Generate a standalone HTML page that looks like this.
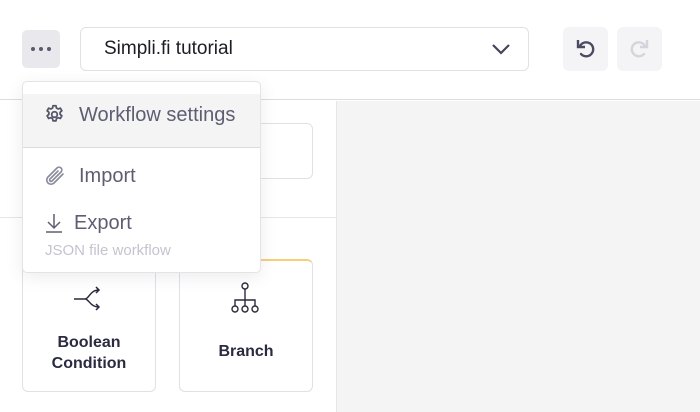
<!DOCTYPE html>
<html><head><style>
*{box-sizing:border-box;margin:0;padding:0}
body{width:700px;height:412px;overflow:hidden;background:#fff;font-family:"Liberation Sans",sans-serif;position:relative}
.a{position:absolute}
</style></head><body>
<div class="a" style="left:0;top:0;width:700px;height:100px;background:#fff;border-bottom:1px solid #dcdce3"></div>
<div class="a" style="left:22px;top:30px;width:38px;height:38px;background:#e8e8ed;border-radius:5px"></div>
<svg class="a" style="left:29px;top:46px" width="24" height="6"><circle cx="4" cy="3" r="2" fill="#5a5a6e"/><circle cx="12" cy="3" r="2" fill="#5a5a6e"/><circle cx="20" cy="3" r="2" fill="#5a5a6e"/></svg>
<div class="a" style="left:80px;top:27px;width:449px;height:44px;border:1px solid #e0e0e6;border-radius:6px"></div>
<div class="a" style="left:104px;top:38px;font-size:19px;color:#1c1c24">Simpli.fi tutorial</div>
<svg class="a" style="left:490px;top:42px" width="22" height="14"><path d="M3 3l8 8 8-8" stroke="#44445a" stroke-width="2.2" fill="none"/></svg>
<div class="a" style="left:563px;top:27px;width:45px;height:44px;background:#f4f4f6;border-radius:6px"></div>
<div class="a" style="left:617px;top:27px;width:45px;height:44px;background:#f4f4f6;border-radius:6px"></div>
<svg class="a" style="left:574px;top:37px" width="24" height="24" viewBox="0 0 24 24"><path d="M6 9a7 7 0 1 1 1 8" stroke="#4a4a60" stroke-width="2.4" fill="none" stroke-linecap="round"/><path d="M4 3v7h7" stroke="#4a4a60" stroke-width="2.4" fill="none"/></svg>
<svg class="a" style="left:627px;top:37px" width="24" height="24" viewBox="0 0 24 24"><path d="M18 9a7 7 0 1 0 -1 8" stroke="#d4d4dc" stroke-width="2.4" fill="none" stroke-linecap="round"/><path d="M20 3v7h-7" stroke="#d4d4dc" stroke-width="2.4" fill="none"/></svg>
<div class="a" style="left:336px;top:101px;width:364px;height:311px;background:#f4f4f5;border-left:1px solid #e6e6ea"></div>
<div class="a" style="left:200px;top:123px;width:113px;height:56px;border:1px solid #e0e0e6;border-radius:6px"></div>
<div class="a" style="left:0;top:217px;width:336px;height:1px;background:#e6e6ea"></div>
<div class="a" style="left:22px;top:259px;width:134px;height:133px;border:1px solid #e0e0e6;border-radius:6px"></div>
<div class="a" style="left:179px;top:259px;width:134px;height:133px;border:1px solid #e0e0e6;border-top:2px solid #f6cf7a;border-radius:6px"></div>
<svg class="a" style="left:73px;top:285px" width="34" height="28" viewBox="0 0 34 28"><path d="M1 14h11M12 14c4 0 5-9 14-9M12 14c4 0 5 8 14 8M23 2l3 3-3 3M23 19l3 3-3 3" stroke="#2a2a3a" stroke-width="1.5" fill="none"/></svg>
<svg class="a" style="left:228px;top:282px" width="34" height="34"><circle cx="17" cy="4" r="3" stroke="#2a2a3a" stroke-width="1.4" fill="none"/><path d="M17 7v20M7 24v-6h20v6" stroke="#2a2a3a" stroke-width="1.4" fill="none"/><circle cx="7" cy="27" r="3" stroke="#2a2a3a" stroke-width="1.4" fill="#fff"/><circle cx="17" cy="27" r="3" stroke="#2a2a3a" stroke-width="1.4" fill="#fff"/><circle cx="27" cy="27" r="3" stroke="#2a2a3a" stroke-width="1.4" fill="#fff"/></svg>
<div class="a" style="left:22px;top:332px;width:134px;text-align:center;font-size:16px;font-weight:bold;color:#2a2a40;line-height:21px">Boolean<br>Condition</div>
<div class="a" style="left:179px;top:343px;width:134px;text-align:center;font-size:16px;font-weight:bold;color:#2a2a40">Branch</div>
<div class="a" style="left:22px;top:81px;width:239px;height:192px;background:#fff;border:1px solid #e3e3e8;border-radius:5px;box-shadow:0 4px 18px rgba(0,0,0,0.08);overflow:hidden">
<div style="position:absolute;left:0;top:12px;width:239px;height:54px;background:#f4f4f5;border-bottom:1px solid #dcdce3"></div>
</div>
<svg class="a" style="left:44px;top:104px" width="21" height="21" viewBox="0 0 24 24"><path d="M10.3 2h3.4l.5 2.6 2 1.1 2.5-.9 1.7 3-2 1.7v2.3l2 1.7-1.7 3-2.5-.9-2 1.1-.5 2.6h-3.4l-.5-2.6-2-1.1-2.5.9-1.7-3 2-1.7v-2.3l-2-1.7 1.7-3 2.5.9 2-1.1z" stroke="#55556a" stroke-width="2" fill="none" stroke-linejoin="round"/><circle cx="12" cy="12" r="3.2" stroke="#55556a" stroke-width="2" fill="none"/></svg>
<div class="a" style="left:79px;top:104px;font-size:20px;color:#5e5e72">Workflow settings</div>
<svg class="a" style="left:44px;top:165px" width="22" height="24" viewBox="0 0 22 24"><path d="M19 9l-9 9a4 4 0 0 1-6-6l9-9a2.6 2.6 0 0 1 4 4l-9 9a1.2 1.2 0 0 1-2-2l8-8" stroke="#8a8a9c" stroke-width="1.6" fill="none" stroke-linecap="round"/></svg>
<div class="a" style="left:79px;top:165px;font-size:20px;color:#5e5e72">Import</div>
<svg class="a" style="left:44px;top:212px" width="20" height="22"><path d="M10 2v14M4 10l6 6 6-6M2 20h16" stroke="#5e5e72" stroke-width="1.5" fill="none"/></svg>
<div class="a" style="left:74px;top:212px;font-size:20px;color:#5e5e72">Export</div>
<div class="a" style="left:45px;top:242px;font-size:15px;color:#c4c4ce">JSON file workflow</div>
</body></html>
